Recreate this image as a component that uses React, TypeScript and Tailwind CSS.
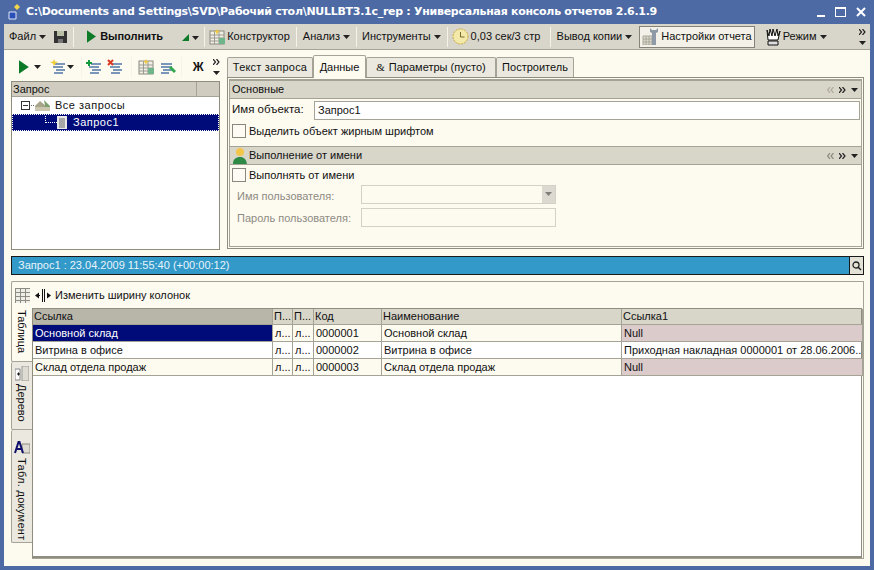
import React from 'react';

const Caret = ({ className = '' }: { className?: string }) => (
  <svg width="7" height="4" viewBox="0 0 7 4" className={className}>
    <path d="M0 0h7L3.500 4z" fill="#222" />
  </svg>
);

const Sep = () => <div className="w-px h-[20px] bg-[#b5b2a6] border-r border-[#f4f2ea] mx-[3px] shrink-0" />;

const PlayIcon = ({ size = 14 }: { size?: number }) => (
  <svg width={size * 0.7} height={size} viewBox="0 0 10 14">
    <path d="M0 0l10 7-10 7z" fill="#0d7a28" />
  </svg>
);

const TableIcon = () => (
  <svg width="17" height="16" viewBox="0 0 17 16">
    <rect x="1" y="2" width="14" height="13" fill="#f2f0e4" stroke="#8a8a80" />
    <path d="M1 6h14M1 9h14M1 12h14M5.500 2v13M10 2v13" stroke="#9a9a92" />
    <rect x="10" y="9" width="6" height="6" fill="#6fb58a" />
    <path d="M8 0l1 2 2 .5-2 1-1 2-1-2-2-1 2-.5z" fill="#f0c93c" />
  </svg>
);

const ListIcon = ({ mark }: { mark: 'star' | 'plus' | 'cross' }) => (
  <svg width="16" height="17" viewBox="0 0 16 17">
    <path d="M5 5h10M3 8h10M6 11h9M4 14h9" stroke="#7a96b8" strokeWidth="2" />
    {mark === 'star' && <path d="M4 0l1 2.500L8 3 5.500 4.500 4 7 2.800 4.500 0 3l3-.5z" fill="#f0cf3a" />}
    {mark === 'plus' && <path d="M3 1v6M0 4h6" stroke="#129a3c" strokeWidth="2" />}
    {mark === 'cross' && <path d="M1 1l5 5M6 1L1 6" stroke="#d8391f" strokeWidth="2" />}
  </svg>
);

const Btn = ({ children, className = '' }: { children: React.ReactNode; className?: string }) => (
  <div className={`flex items-center gap-[3px] shrink-0 whitespace-nowrap ${className}`}>{children}</div>
);

const Chevrons = ({ color = '#222', dir = 'right' }: { color?: string; dir?: 'left' | 'right' }) => (
  <svg width="7" height="6" viewBox="0 0 7 6">
    <path d={dir === 'right' ? 'M0 0l2.500 3-2.500 3M3.500 0L6 3 3.500 6' : 'M3 0L.5 3 3 6M6.500 0L4 3l2.500 3'} stroke={color} strokeWidth="1.200" fill="none" />
  </svg>
);

const Overflow = () => (
  <div className="flex flex-col items-center gap-[6px]">
    <Chevrons />
    <Caret />
  </div>
);

const Section = ({ title, icon, dim }: { title: string; icon?: React.ReactNode; dim?: boolean }) => (
  <div className="bg-[#d8d5c9] border-y border-[#a5a296] flex items-center pl-[2px] pr-[3px] gap-[1px] h-full">
    {icon}
    <span className="flex-1">{title}</span>
    <div className="flex items-center gap-[5px]">
      <Chevrons dir="left" color={dim ? '#b0ad9f' : '#8d8a7e'} />
      <Chevrons />
      <Caret />
    </div>
  </div>
);

const Check = () => <div className="w-[14px] h-[14px] bg-[#fdfbf3] border border-[#8a887c] shrink-0" />;

const Tab = ({ label, active, className = '' }: { label: React.ReactNode; active?: boolean; className?: string }) => (
  <div
    className={`flex items-center justify-center border border-b-0 border-[#a5a296] rounded-t-[2px] whitespace-nowrap ${
      active ? 'h-[23px] bg-[#fdfaf0] -mb-px z-10' : 'h-[20px] bg-[#ebe9df]'
    } ${className}`}
  >
    {label}
  </div>
);

const VTab = ({
  label,
  icon,
  active,
  className = '',
  labelClass = 'mt-[3px]',
}: {
  label: string;
  icon: React.ReactNode;
  active?: boolean;
  className?: string;
  labelClass?: string;
}) => (
  <div className={`flex flex-col items-center border-l border-b border-[#a5a296] rounded-l-[2px] ${active ? 'bg-[#fdfaf0]' : 'bg-[#ebe9df]'} ${className}`}>
    {icon}
    <span className={`[writing-mode:vertical-rl] whitespace-nowrap text-[11px] ${labelClass}`}>{label}</span>
  </div>
);

const cols = 'grid grid-cols-[240px_20px_21px_68px_240px_241px]';
const cell = 'border-r border-b border-[#a5a296] px-[2px] flex items-center overflow-hidden whitespace-nowrap';

const rows = [
  { name: 'Основной склад', code: '0000001', ref: 'Null', bg: 'bg-[#fdfaf0]', nullRef: true, selected: true },
  { name: 'Витрина в офисе', code: '0000002', ref: 'Приходная накладная 0000001 от 28.06.2006...', bg: 'bg-white', nullRef: false, selected: false },
  { name: 'Склад отдела продаж', code: '0000003', ref: 'Null', bg: 'bg-[#fdfaf0]', nullRef: true, selected: false },
];

export default function App() {
  return (
    <div className="w-[874px] h-[570px] overflow-hidden flex flex-col bg-[#4d6aa5] text-[11px] text-[#111] font-['Liberation_Sans',sans-serif] border-x-[4px] border-b-[4px] border-[#4d6aa5]">
      {/* title bar */}
      <div className="h-[24px] shrink-0 flex items-center text-white pr-[4px]">
        <svg width="18" height="18" viewBox="0 0 18 18" className="ml-[2px] mr-[2px] shrink-0">
          <path d="M3 9h7v7H3z" fill="#2b4fb8" stroke="#dfe6f5" />
          <path d="M11 1l3 3-3 3-3-3z" fill="#f5d64a" />
        </svg>
        <span className="font-['DejaVu_Sans',sans-serif] font-bold text-[11px] flex-1 whitespace-nowrap tracking-[-0.28px]">
          C:\Documents and Settings\SVD\Рабочий стол\NULLBT3.1c_rep : Универсальная консоль отчетов 2.6.1.9
        </span>
        <div className="flex items-center gap-[10px]">
          <div className="w-[8px] h-[2px] bg-white mt-[8px]" />
          <div className="w-[11px] h-[10px] border border-white border-t-2" />
          <svg width="10" height="10" viewBox="0 0 10 10"><path d="M1 1l8 8M9 1l-8 8" stroke="#fff" strokeWidth="2" /></svg>
        </div>
      </div>

      {/* main toolbar */}
      <div className="h-[26px] shrink-0 bg-[#d8d5ca] border-b border-[#a5a296] flex items-center pl-[5px] gap-[3px] text-[11px]">
        <Btn>Файл <Caret /></Btn>
        <svg width="13" height="13" viewBox="0 0 13 13" className="ml-[5px]"><path d="M0 1h13v12H0z" fill="#333" /><path d="M3 1h7v5H3z" fill="#b7c0a5" /><path d="M4 9h5v4H4z" fill="#777" /></svg>
        <Sep />
        <div className="w-[4px]" />
        <PlayIcon size={13} />
        <span className="font-bold ml-[1px] w-[79px] shrink-0">Выполнить</span>
        <Btn className="mt-[2px]">
          <svg width="7" height="7" viewBox="0 0 7 7"><path d="M7 0v7H0z" fill="#0d7a28" /></svg>
          <Caret />
        </Btn>
        <div className="-ml-[1px]"><Sep /></div>
        <div className="-ml-[2px]"><TableIcon /></div>
        <span className="-ml-[2px] whitespace-nowrap">Конструктор</span>
        <Sep />
        <Btn>Анализ <Caret /></Btn>
        <Sep />
        <div className="-ml-[1px]"><Btn>Инструменты <Caret /></Btn></div>
        <Sep />
        <svg width="17" height="17" viewBox="0 0 17 17" className="-ml-[2px]"><circle cx="8.500" cy="8.500" r="7.500" fill="#f3e9a8" stroke="#c9a93a" strokeDasharray="2 1" /><path d="M8.500 4v5h4" stroke="#7a6a2a" fill="none" /></svg>
        <span className="whitespace-nowrap -ml-[1px] w-[73px] shrink-0">0,03 сек/3 стр</span>
        <Sep />
        <Btn>Вывод копии <Caret /></Btn>
        <div className="h-[22px] ml-[4px] bg-[#f3f1e8] border border-[#85827a] flex items-center pl-[2px] pr-[2px] gap-[1px] whitespace-nowrap">
          <svg width="18" height="17" viewBox="0 0 18 17"><path d="M1 8h9v9H1z" fill="#dcdacd" stroke="#aaa89b" /><path d="M1 11h9M1 14h9M4 8v9M7 8v9" stroke="#aaa89b" /><path d="M12 4v13" stroke="#8f9aa8" strokeWidth="4" /><path d="M8 0v4l4 2 4-2V0l-2 2h-4z" fill="#8f9aa8" /></svg>
          Настройки отчета
        </div>
        <svg width="18" height="18" viewBox="0 0 18 18" className="ml-[6px]"><path d="M3 2l2 6 1-7 2 7 1-7 2 7 2-7 1 7 2-5-2 9H4z" fill="#fff" stroke="#111" /><path d="M4 13h10v4H4z" fill="#ddd" stroke="#111" /></svg>
        <Btn className="-ml-[2px]">Режим<Caret /></Btn>
        <div className="flex-1" />
        <div className="pr-[4px]"><Overflow /></div>
      </div>

      {/* work area */}
      <div className="flex-1 min-h-0 bg-[#fdfaf0] flex flex-col pl-[7px] pr-[6px] pb-[7px]">
        <div className="h-[200px] shrink-0 flex pt-[3px]">
          {/* left column */}
          <div className="w-[209px] shrink-0 flex flex-col">
            <div className="h-[28px] shrink-0 flex items-center pl-[8px] gap-[1px]">
              <PlayIcon size={14} />
              <Caret className="ml-[4px] mr-[8px]" />
              <ListIcon mark="star" />
              <Caret className="mr-[3px]" />
              <Sep />
              <ListIcon mark="plus" />
              <div className="w-[3px]" />
              <ListIcon mark="cross" />
              <div className="w-[3px]" />
              <Sep />
              <div className="w-[1px]" />
              <TableIcon />
              <div className="w-[3px]" />
              <svg width="17" height="17" viewBox="0 0 17 17"><path d="M1 5h11M1 8h11M3 11h9M1 14h8" stroke="#7a96b8" strokeWidth="2" /><path d="M9 9l5 5 2-2-5-5z" fill="#2fa84f" /></svg>
              <Sep />
              <span className="font-bold text-[12px] ml-[7px] mr-[6px]">Ж</span>
              <div className="ml-[2px]"><Overflow /></div>
            </div>
            <div className="flex-1 min-h-0 border border-[#8f8c80] bg-white">
              <div className="h-[15px] bg-[#d0cdc0] border-b border-[#a5a296] flex">
                <span className="flex-1 pl-[1px] border-r border-[#a5a296] leading-[14px]">Запрос</span>
                <div className="w-[22px]" />
              </div>
              <div className="h-[17px] flex items-center pl-[9px] gap-[1px]">
                <div className="w-[9px] h-[9px] border border-[#333] flex items-center justify-center"><div className="w-[5px] h-px bg-[#333]" /></div>
                <div className="w-[3px] border-t border-dotted border-[#666]" />
                <svg width="16" height="13" viewBox="0 0 16 13"><path d="M0 7l5-5 6 5v5H0z" fill="#a8a48c" /><path d="M9 1l6 6v5h-4z" fill="#7ca06d" /><path d="M0 8h15v4H0z" fill="#c9c5ae" /></svg>
                <span className="ml-[3px] tracking-[0.5px]">Все запросы</span>
              </div>
              <div className="h-[17px] flex items-center bg-[#000b7a] border border-dotted border-white text-white">
                <div className="ml-[32px] w-[12px] h-[7px] -mt-[7px] border-b border-l border-dotted border-white" />
                <svg width="10" height="13" viewBox="0 0 10 13"><path d="M0 0h10v13H0z" fill="#e8e8e8" /><path d="M2 3h6M2 5h6M2 7h6M2 9h6M2 11h6" stroke="#666" /></svg>
                <span className="ml-[6px] tracking-[0.5px]">Запрос1</span>
              </div>
            </div>
          </div>

          {/* right column */}
          <div className="flex-1 min-w-0 ml-[7px] flex flex-col">
            <div className="h-[24px] shrink-0 flex items-end pt-[1px]">
              <Tab label={<span className="tracking-[0.2px]">Текст запроса</span>} className="w-[86px]" />
              <Tab label="Данные" active className="w-[53px]" />
              <Tab label={<><span className="font-['Liberation_Serif',serif] mr-[4px]">&amp;</span>Параметры (пусто)</>} className="w-[130px]" />
              <Tab label="Построитель" className="w-[78px]" />
            </div>
            <div className="flex-1 min-h-0 border border-[#8f8c80] p-[1px] mb-[1px]">
              <div className="h-full border border-[#a5a296] flex flex-col">
                <div className="h-[19px] shrink-0"><Section title="Основные" dim /></div>
                <div className="h-[22px] flex items-center pl-[2px] pr-[1px] gap-[5px]">
                  <span className="w-[77px] shrink-0 text-[11.500px]">Имя объекта:</span>
                  <div className="flex-1 h-[19px] bg-white border border-[#a5a296] pl-[3px] leading-[17px]">Запрос1</div>
                </div>
                <div className="h-[20px] flex items-center pl-[2px] gap-[3px] mb-[5px]">
                  <Check />
                  <span>Выделить объект жирным шрифтом</span>
                </div>
                <div className="h-[19px] shrink-0">
                  <Section
                    title="Выполнение от имени"
                    icon={
                      <svg width="16" height="17" viewBox="0 0 16 17" className="shrink-0">
                        <circle cx="8" cy="5" r="4" fill="#f1c64a" />
                        <path d="M1 17c0-5 3-7 7-7s6 2 7 7z" fill="#2e8b45" />
                      </svg>
                    }
                  />
                </div>
                <div className="h-[20px] flex items-center pl-[2px] gap-[3px]">
                  <Check />
                  <span>Выполнять от имени</span>
                </div>
                <div className="flex items-center h-[22px] pl-[7px] text-[#8d8b82]">
                  <span className="w-[124px] shrink-0">Имя пользователя:</span>
                  <div className="w-[195px] h-[19px] -mt-[4px] border border-[#d3d1c6] flex justify-end">
                    <div className="w-[13px] bg-[#dcdad0] flex items-center justify-center"><Caret className="opacity-50" /></div>
                  </div>
                </div>
                <div className="flex items-center h-[22px] pl-[7px] text-[#8d8b82]">
                  <span className="w-[124px] shrink-0">Пароль пользователя:</span>
                  <div className="w-[195px] h-[19px] -mt-[2px] border border-[#d3d1c6]" />
                </div>
              </div>
            </div>
          </div>
        </div>

        {/* result bar */}
        <div className="h-[19px] shrink-0 mt-[6px] bg-[#3299c9] border border-[#1a1a1a] flex items-center text-[#e8f4fa] pl-[6px]">
          <span className="flex-1">Запрос1 : 23.04.2009 11:55:40 (+00:00:12)</span>
          <div className="w-[14px] h-full bg-[#e4e1d6] border-l border-[#1a1a1a] flex items-center justify-center">
            <svg width="10" height="10" viewBox="0 0 10 10"><circle cx="4" cy="4" r="3" fill="none" stroke="#222" strokeWidth="1.300" /><path d="M6 6l3 3" stroke="#222" strokeWidth="1.500" /></svg>
          </div>
        </div>

        {/* result panel */}
        <div className="flex-1 min-h-0 mt-[6px] flex">
          <div className="w-[21px] shrink-0 flex flex-col">
            <VTab
              active
              label="Таблица"
              className="h-[81px] border-t pt-[6px]"
              labelClass="mt-[7px]"
              icon={<svg width="15" height="15" viewBox="0 0 15 15"><path d="M0 0h15v15H0z" fill="#efeee6" /><path d="M0 .5h15M0 4.500h15M0 8.500h15M0 12.500h15M.5 0v15M5.500 0v15M10.500 0v15" stroke="#8d8b82" /></svg>}
            />
            <VTab
              label="Дерево"
              className="h-[68px] pt-[4px]"
              labelClass="mt-[3px]"
              icon={<svg width="14" height="15" viewBox="0 0 14 15"><path d="M0 3h5v11H0z" fill="#fff" stroke="#888" /><path d="M7 0h7v15H7z" fill="#dedcd2" stroke="#999" /><path d="M2 8h3M3.500 6.500v3" stroke="#111" /></svg>}
            />
            <VTab
              label="Табл. документ"
              className="h-[113px] pt-[10px]"
              labelClass="mt-[4px] tracking-[0.3px]"
              icon={<svg width="16" height="14" viewBox="0 0 16 14"><path d="M8 4h8v9H8z" fill="#dedcd2" stroke="#8d8b82" /><path d="M1 13L4.500 2h1L9 13M2.500 9h5" stroke="#10106a" strokeWidth="2" fill="none" /></svg>}
            />
          </div>
          <div className="flex-1 min-w-0 border border-[#a5a296] border-l-0 flex flex-col">
            <div className="h-[26px] shrink-0 flex items-center pl-[3px] gap-[4px]">
              <svg width="16" height="13" viewBox="0 0 16 13"><path d="M7.500 0v13M9.500 0v13" stroke="#111" /><path d="M5 6.500H1M13 6.500h2" stroke="#111" /><path d="M4 3.500v6L0 6.500zM12 3.500v6l4-3z" fill="#111" /></svg>
              <span>Изменить ширину колонок</span>
            </div>
            <div className="flex-1 min-h-0 mr-px border border-b-2 border-[#8f8c80] bg-white">
              <div className={`${cols} h-[16px] bg-[#d8d5c9]`}>
                <div className={`${cell} !pl-[1px] bg-[#b8b5a9]`}>Ссылка</div>
                <div className={`${cell} !pl-[1px]`}>П...</div>
                <div className={`${cell} !pl-[1px]`}>П...</div>
                <div className={`${cell} !pl-[1px]`}>Код</div>
                <div className={`${cell} !pl-[1px]`}>Наименование</div>
                <div className={`${cell} !pl-[1px]`}>Ссылка1</div>
              </div>
              {rows.map((row) => (
                <div key={row.code} className={`${cols} h-[17px] ${row.bg}`}>
                  <div className={`${cell} ${row.selected ? 'bg-[#000b7a] text-white' : ''}`}>{row.name}</div>
                  <div className={cell}>л...</div>
                  <div className={cell}>л...</div>
                  <div className={cell}>{row.code}</div>
                  <div className={cell}>{row.name}</div>
                  <div className={`${cell} ${row.nullRef ? 'bg-[#dccbcb]' : ''}`}>{row.ref}</div>
                </div>
              ))}
            </div>
          </div>
        </div>
      </div>
    </div>
  );
}
